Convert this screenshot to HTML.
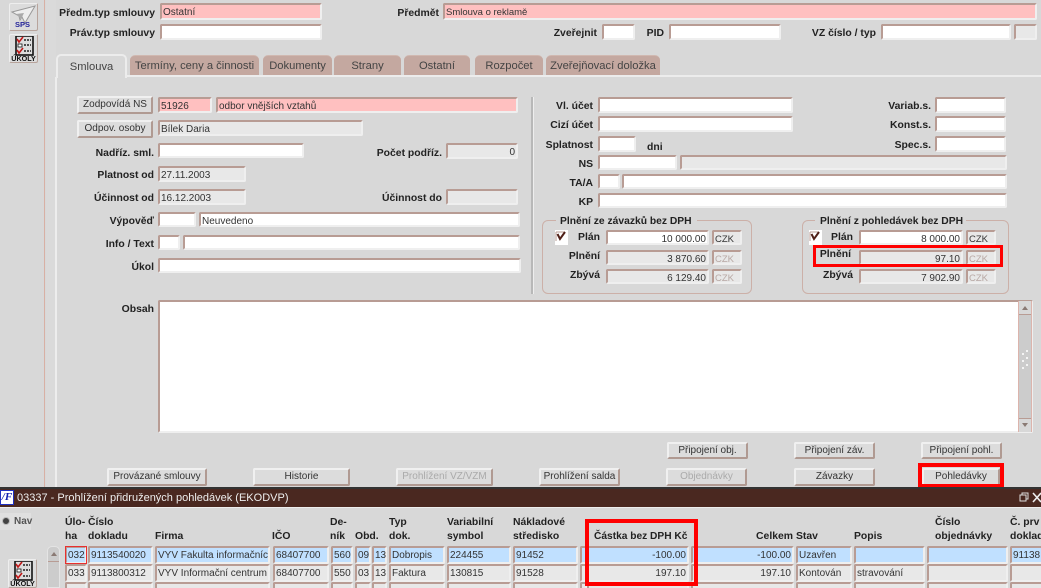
<!DOCTYPE html>
<html><head><meta charset="utf-8"><style>
html,body{margin:0;padding:0;width:1041px;height:588px;overflow:hidden;background:#d8d8d8}
#w{position:relative;width:1041px;height:588px;overflow:hidden;font-family:"Liberation Sans",sans-serif;filter:blur(.3px)}
#w div{position:absolute;box-sizing:border-box;white-space:nowrap}
.l{font-weight:bold;font-size:10.4px;line-height:14px;margin-top:2px;color:#222;text-align:right}
.h{font-weight:bold;font-size:10.4px;line-height:14px;margin-top:2px;color:#222}
.f{border:2px solid;border-color:#b89c94 #efefef #efefef #b89c94;border-radius:2px;font-size:10px;line-height:14px;color:#333;padding:1px 1px 0}
.w{background:#fff}.p{background:#ffc0c0}.g{background:#e8e8e8}.b{background:#c0e0ff}
.r{text-align:right}
.z{color:#b8a8a4}
.n{font-size:10px!important}
.k{font-size:9.5px!important}
.t{background:#c4a8a0;border-radius:5px 5px 0 0;border-top:1px solid #d0b8b0;font-size:11.2px;line-height:20px;color:#444;text-align:center;height:20px;top:55px}
.btn{background:#dcdcdc;border:2px solid;border-color:#f0f0f0 #b09a92 #b09a92 #f0f0f0;border-radius:2px;font-size:10px;line-height:13px;color:#333;text-align:center}
.dis{color:#aaa}
.gb{border:1.5px solid #ccb0a8;border-radius:6px}
.red{border:4px solid #f00}
.c{font-size:10px;line-height:14px;padding:1px 1px 0}
</style></head><body><div id="w">

<!-- left strip -->
<div style="left:44px;top:0;width:1px;height:489px;background:#d8b0a4"></div>
<div style="left:46px;top:0;width:10px;height:489px;background:#dadada"></div>
<div style="left:55px;top:77px;width:2px;height:411px;background:#ededed"></div>

<!-- SPS icon -->
<div style="left:9px;top:3px;width:29px;height:28px;background:#dcdcdc;border:1px solid;border-color:#eee #b8a49c #b8a49c #eee;border-radius:2px">
<svg width="27" height="26" style="position:absolute;left:0;top:0"><path d="M2 8L25 2L15 19L12 13L10 16L9 12Z" fill="#eee" stroke="#999" stroke-width="1"/><path d="M6 10L14 9L11 15" fill="#aaa"/></svg>
<div style="left:5px;top:17px;font-size:7.5px;line-height:8px;font-weight:bold;color:#24249a">SPS</div></div>
<!-- UKOLY icon -->
<div style="left:9px;top:34px;width:29px;height:29px;background:#dcdcdc;border:1px solid;border-color:#eee #b8a49c #b8a49c #eee;border-radius:2px">
<svg width="27" height="20" style="position:absolute;left:0;top:1px"><rect x="6" y="0" width="17" height="19" fill="#ddd" stroke="#111" stroke-width="1.6"/><path d="M7 3L9 6L13 1M7 14L9 17L13 12" stroke="#c01818" stroke-width="1.6" fill="none"/><rect x="8" y="8" width="4" height="3" fill="#fff" stroke="#111" stroke-width=".8"/><path d="M14 4H21M14 9H21M14 15H21" stroke="#222" stroke-width="1.4" stroke-dasharray="2 1"/></svg>
<div style="left:0;top:20px;width:27px;text-align:center;font-size:7.2px;line-height:7px;font-weight:bold;color:#111">ÚKOLY</div></div>

<!-- header -->
<div class="l" style="right:886px;top:5px">Předm.typ smlouvy</div>
<div class="f p" style="left:160px;top:3px;width:162px;height:17px">Ostatní</div>
<div class="l" style="right:886px;top:25px">Práv.typ smlouvy</div>
<div class="f w" style="left:160px;top:24px;width:162px;height:16px"></div>
<div class="l" style="right:602px;top:5px">Předmět</div>
<div class="f p" style="left:443px;top:3px;width:594px;height:17px;font-size:9.5px">Smlouva o reklamě</div>
<div class="l" style="right:444px;top:25px">Zveřejnit</div>
<div class="f w" style="left:602px;top:24px;width:33px;height:16px"></div>
<div class="l" style="right:377px;top:25px">PID</div>
<div class="f w" style="left:669px;top:24px;width:112px;height:16px"></div>
<div class="l" style="right:165px;top:25px">VZ číslo / typ</div>
<div class="f w" style="left:881px;top:24px;width:130px;height:16px"></div>
<div class="f g" style="left:1014px;top:24px;width:23px;height:16px"></div>

<!-- tabs -->
<div style="left:126px;top:75px;width:915px;height:2px;background:#ececec"></div>
<div style="left:56px;top:54px;width:71px;height:24px;background:#d8d8d8;border:2px solid #ececec;border-bottom:0;border-radius:5px 5px 0 0;font-size:11.2px;line-height:22px;color:#444;text-align:center">Smlouva</div>
<div class="t" style="left:130px;width:129px">Termíny, ceny a činnosti</div>
<div class="t" style="left:263px;width:69px">Dokumenty</div>
<div class="t" style="left:334px;width:67px">Strany</div>
<div class="t" style="left:404px;width:66px">Ostatní</div>
<div class="t" style="left:475px;width:68px">Rozpočet</div>
<div class="t" style="left:546px;width:114px">Zveřejňovací doložka</div>

<!-- left column -->
<div class="btn" style="left:77px;top:96px;width:76px;height:18px">Zodpovídá NS</div>
<div class="f p" style="left:158px;top:97px;width:54px;height:16px">51926</div>
<div class="f p" style="left:216px;top:97px;width:302px;height:16px">odbor vnějších vztahů</div>
<div class="btn" style="left:77px;top:120px;width:76px;height:18px">Odpov. osoby</div>
<div class="f g" style="left:158px;top:120px;width:205px;height:16px">Bílek Daria</div>
<div class="l" style="right:887px;top:145px">Nadříz. sml.</div>
<div class="f w" style="left:158px;top:143px;width:146px;height:15px"></div>
<div class="l" style="right:887px;top:167px">Platnost od</div>
<div class="f g" style="left:158px;top:166px;width:88px;height:16px">27.11.2003</div>
<div class="l" style="right:887px;top:190px">Účinnost od</div>
<div class="f g" style="left:158px;top:189px;width:88px;height:16px">16.12.2003</div>
<div class="l" style="right:887px;top:213px">Výpověď</div>
<div class="f w" style="left:158px;top:212px;width:38px;height:15px"></div>
<div class="f w" style="left:199px;top:212px;width:321px;height:15px">Neuvedeno</div>
<div class="l" style="right:887px;top:236px">Info / Text</div>
<div class="f w" style="left:158px;top:235px;width:22px;height:15px"></div>
<div class="f w" style="left:183px;top:235px;width:337px;height:15px"></div>
<div class="l" style="right:887px;top:259px">Úkol</div>
<div class="f w" style="left:158px;top:258px;width:363px;height:15px"></div>
<div class="l" style="right:599px;top:145px">Počet podříz.</div>
<div class="f g r" style="left:446px;top:143px;width:72px;height:16px">0</div>
<div class="l" style="right:599px;top:190px">Účinnost do</div>
<div class="f g" style="left:446px;top:189px;width:72px;height:16px"></div>

<!-- divider -->
<div style="left:531px;top:97px;width:2px;height:197px;background:#b8b8b8"></div>
<div style="left:533px;top:97px;width:1px;height:197px;background:#eee"></div>

<!-- right column -->
<div class="l" style="right:448px;top:98px">Vl. účet</div>
<div class="f w" style="left:598px;top:97px;width:195px;height:16px"></div>
<div class="l" style="right:448px;top:117px">Cizí účet</div>
<div class="f w" style="left:598px;top:116px;width:195px;height:16px"></div>
<div class="l" style="right:448px;top:137px">Splatnost</div>
<div class="f w" style="left:598px;top:136px;width:38px;height:16px"></div>
<div class="h" style="left:647px;top:139px">dni</div>
<div class="l" style="right:448px;top:156px">NS</div>
<div class="f w" style="left:598px;top:155px;width:79px;height:15px"></div>
<div class="f g" style="left:680px;top:155px;width:327px;height:15px"></div>
<div class="l" style="right:448px;top:175px">TA/A</div>
<div class="f w" style="left:598px;top:174px;width:22px;height:15px"></div>
<div class="f w" style="left:622px;top:174px;width:385px;height:15px"></div>
<div class="l" style="right:448px;top:194px">KP</div>
<div class="f w" style="left:598px;top:193px;width:409px;height:15px"></div>
<div class="l" style="right:110px;top:98px">Variab.s.</div>
<div class="f w" style="left:935px;top:97px;width:71px;height:16px"></div>
<div class="l" style="right:110px;top:117px">Konst.s.</div>
<div class="f w" style="left:935px;top:116px;width:71px;height:16px"></div>
<div class="l" style="right:110px;top:137px">Spec.s.</div>
<div class="f w" style="left:935px;top:136px;width:71px;height:16px"></div>

<!-- group boxes -->
<div class="gb" style="left:542px;top:220px;width:210px;height:74px"></div>
<div style="left:556px;top:214px;width:141px;height:14px;background:#d8d8d8"></div>
<div class="h" style="left:560px;top:213px;font-size:10.3px">Plnění ze závazků bez DPH</div>
<div style="left:555px;top:230px;width:13px;height:15px;background:#fff"><svg width="13" height="15" style="position:absolute;left:0;top:0"><path d="M1 2H10" fill="none" stroke="#b89c94"/><path d="M1 2V11" fill="none" stroke="#b89c94"/><path d="M2.5 4L5 9L10 2" fill="none" stroke="#502018" stroke-width="2"/></svg></div>
<div class="l" style="right:441px;top:229px">Plán</div>
<div class="f w r n" style="left:606px;top:230px;width:103px;height:15px">10 000.00</div>
<div class="f g k" style="left:712px;top:230px;width:30px;height:15px">CZK</div>
<div class="l" style="right:441px;top:248px">Plnění</div>
<div class="f g r n" style="left:606px;top:250px;width:103px;height:15px">3 870.60</div>
<div class="f g z k" style="left:712px;top:250px;width:30px;height:15px">CZK</div>
<div class="l" style="right:441px;top:267px">Zbývá</div>
<div class="f g r n" style="left:606px;top:269px;width:103px;height:15px">6 129.40</div>
<div class="f g z k" style="left:712px;top:269px;width:30px;height:15px">CZK</div>

<div class="gb" style="left:802px;top:220px;width:207px;height:74px"></div>
<div style="left:815px;top:214px;width:151px;height:14px;background:#d8d8d8"></div>
<div class="h" style="left:820px;top:213px;font-size:10.3px">Plnění z pohledávek bez DPH</div>
<div style="left:809px;top:230px;width:13px;height:15px;background:#fff"><svg width="13" height="15" style="position:absolute;left:0;top:0"><path d="M1 2H10" fill="none" stroke="#b89c94"/><path d="M1 2V11" fill="none" stroke="#b89c94"/><path d="M2.5 4L5 9L10 2" fill="none" stroke="#502018" stroke-width="2"/></svg></div>
<div class="l" style="right:188px;top:229px">Plán</div>
<div class="f w r n" style="left:859px;top:230px;width:104px;height:15px">8 000.00</div>
<div class="f g k" style="left:966px;top:230px;width:30px;height:15px">CZK</div>
<div class="l" style="right:190px;top:246px">Plnění</div>
<div class="f g r n" style="left:859px;top:250px;width:104px;height:15px">97.10</div>
<div class="f g z k" style="left:966px;top:250px;width:30px;height:15px">CZK</div>
<div class="l" style="right:188px;top:267px">Zbývá</div>
<div class="f g r n" style="left:859px;top:269px;width:104px;height:15px">7 902.90</div>
<div class="f g z k" style="left:966px;top:269px;width:30px;height:15px">CZK</div>
<div class="red" style="left:813px;top:245px;width:190px;height:22px;border-width:3px"></div>

<!-- Obsah -->
<div class="l" style="right:887px;top:301px">Obsah</div>
<div class="f w" style="left:158px;top:300px;width:875px;height:133px"></div>
<div style="left:1018px;top:301px;width:14px;height:131px;background:#ccc;border-left:1px solid #dcb4ac;border-right:1px solid #dcb4ac">
<div style="left:0;top:0;width:12px;height:14px;background:#d8d8d8;border-bottom:1px solid #b89c94"></div>
<div style="left:3px;top:5px;width:0;height:0;border:3px solid transparent;border-top:0;border-bottom:4px solid #8a7a74"></div>
<div style="left:0;bottom:0;width:12px;height:14px;background:#d8d8d8;border-top:1px solid #b89c94"></div>
<div style="left:3px;bottom:5px;width:0;height:0;border:3px solid transparent;border-bottom:0;border-top:4px solid #8a7a74"></div>
<div style="left:3px;top:52px;width:2px;height:2px;background:#f4f4f4;box-shadow:4px -3px #f4f4f4,0 7px #f4f4f4,4px 4px #f4f4f4,0 14px #f4f4f4,4px 11px #f4f4f4"></div>
</div>

<!-- buttons -->
<div class="btn" style="left:667px;top:442px;width:81px;height:17px">Připojení obj.</div>
<div class="btn" style="left:794px;top:442px;width:81px;height:17px">Připojení záv.</div>
<div class="btn" style="left:921px;top:442px;width:81px;height:17px">Připojení pohl.</div>
<div class="btn" style="left:107px;top:468px;width:100px;height:18px">Provázané smlouvy</div>
<div class="btn" style="left:253px;top:468px;width:97px;height:18px">Historie</div>
<div class="btn dis" style="left:396px;top:468px;width:97px;height:18px">Prohlížení VZ/VZM</div>
<div class="btn" style="left:539px;top:468px;width:81px;height:18px">Prohlížení salda</div>
<div class="btn dis" style="left:666px;top:468px;width:81px;height:18px">Objednávky</div>
<div class="btn" style="left:794px;top:468px;width:81px;height:18px">Závazky</div>
<div class="btn" style="left:922px;top:468px;width:78px;height:18px">Pohledávky</div>
<div class="red" style="left:918px;top:463px;width:86px;height:25px"></div>

<!-- title bar -->
<div style="left:0;top:487px;width:1041px;height:2px;background:#333"></div>
<div style="left:0;top:489px;width:1041px;height:18px;background:#4a2820;color:#eee;font-size:11px;line-height:18px;padding-left:17px">03337 - Prohlížení přidružených pohledávek (EKODVP)</div>
<div style="left:0;top:490px;width:14px;height:15px;background:#fff;border:1px solid #2030c0;color:#1020b0;font:italic bold 11px/13px 'Liberation Serif',serif;text-align:center">/F</div>
<svg width="24" height="18" style="position:absolute;left:1017px;top:489px"><rect x="5" y="4" width="6" height="6" fill="none" stroke="#ddd"/><rect x="3" y="6" width="6" height="6" fill="#4a2820" stroke="#ddd"/><path d="M16 4L24 13M24 4L16 13" stroke="#eee" stroke-width="1.6"/></svg>
<div style="left:0;top:507px;width:1041px;height:81px;background:#d8d8d8;border-top:1px solid #eee"></div>

<!-- Nav -->
<div style="left:0;top:513px;width:31px;height:17px;background:#e0e0e0"></div>
<div style="left:2px;top:517px;width:8px;height:8px;border-radius:50%;background:#444;border:1px solid #bbb"></div>
<div style="left:14px;top:515px;font-size:10px;line-height:14px;color:#555;font-weight:bold">Nav</div>
<div style="left:8px;top:559px;width:29px;height:29px;background:#dcdcdc;border:1px solid;border-color:#eee #b8a49c #b8a49c #eee;border-radius:2px">
<svg width="27" height="20" style="position:absolute;left:0;top:1px"><rect x="6" y="0" width="17" height="19" fill="#ddd" stroke="#111" stroke-width="1.6"/><path d="M7 3L9 6L13 1M7 14L9 17L13 12" stroke="#c01818" stroke-width="1.6" fill="none"/><rect x="8" y="8" width="4" height="3" fill="#fff" stroke="#111" stroke-width=".8"/><path d="M14 4H21M14 9H21M14 15H21" stroke="#222" stroke-width="1.4" stroke-dasharray="2 1"/></svg>
<div style="left:0;top:20px;width:27px;text-align:center;font-size:7.2px;line-height:7px;font-weight:bold;color:#111">ÚKOLY</div></div>

<!-- table headers -->
<div class="h" style="left:65px;top:514px">Úlo-<br>ha</div>
<div class="h" style="left:88px;top:514px">Číslo<br>dokladu</div>
<div class="h" style="left:155px;top:528px">Firma</div>
<div class="h" style="left:272px;top:528px">IČO</div>
<div class="h" style="left:330px;top:514px">De-<br>ník</div>
<div class="h" style="left:355px;top:528px">Obd.</div>
<div class="h" style="left:389px;top:514px">Typ<br>dok.</div>
<div class="h" style="left:447px;top:514px">Variabilní<br>symbol</div>
<div class="h" style="left:513px;top:514px">Nákladové<br>středisko</div>
<div class="h" style="left:594px;top:528px;font-size:10.2px">Částka bez DPH Kč</div>
<div class="h" style="right:248px;top:528px">Celkem</div>
<div class="h" style="left:796px;top:528px">Stav</div>
<div class="h" style="left:854px;top:528px">Popis</div>
<div class="h" style="left:935px;top:514px">Číslo<br>objednávky</div>
<div class="h" style="left:1010px;top:514px">Č. prv<br>doklad</div>

<!-- row 1 -->
<div class="f b c" style="left:65px;top:546px;width:22px;height:18px">032</div>
<div class="f b c" style="left:88px;top:546px;width:65px;height:18px">9113540020</div>
<div class="f b c" style="left:155px;top:546px;width:115px;height:18px">VYV Fakulta informačníc</div>
<div class="f b c" style="left:273px;top:546px;width:56px;height:18px">68407700</div>
<div class="f b c" style="left:331px;top:546px;width:22px;height:18px">560</div>
<div class="f b c" style="left:355px;top:546px;width:16px;height:18px">09</div>
<div class="f b c" style="left:372px;top:546px;width:15px;height:18px">13</div>
<div class="f b c" style="left:389px;top:546px;width:56px;height:18px">Dobropis</div>
<div class="f b c" style="left:447px;top:546px;width:64px;height:18px">224455</div>
<div class="f b c" style="left:513px;top:546px;width:65px;height:18px">91452</div>
<div class="f b c" style="left:580px;top:546px;width:7px;height:18px"></div>
<div class="f b c r" style="left:587px;top:546px;width:102px;height:18px">-100.00</div>
<div class="f b c r" style="left:691px;top:546px;width:103px;height:18px">-100.00</div>
<div class="f b c" style="left:796px;top:546px;width:56px;height:18px">Uzavřen</div>
<div class="f b c" style="left:854px;top:546px;width:71px;height:18px"></div>
<div class="f b c" style="left:927px;top:546px;width:81px;height:18px"></div>
<div class="f b c" style="left:1010px;top:546px;width:35px;height:18px">91138</div>
<!-- row 2 -->
<div class="f g c" style="left:65px;top:564px;width:22px;height:18px">033</div>
<div class="f g c" style="left:88px;top:564px;width:65px;height:18px">9113800312</div>
<div class="f g c" style="left:155px;top:564px;width:115px;height:18px">VYV Informační centrum</div>
<div class="f g c" style="left:273px;top:564px;width:56px;height:18px">68407700</div>
<div class="f g c" style="left:331px;top:564px;width:22px;height:18px">550</div>
<div class="f g c" style="left:355px;top:564px;width:16px;height:18px">03</div>
<div class="f g c" style="left:372px;top:564px;width:15px;height:18px">13</div>
<div class="f g c" style="left:389px;top:564px;width:56px;height:18px">Faktura</div>
<div class="f g c" style="left:447px;top:564px;width:64px;height:18px">130815</div>
<div class="f g c" style="left:513px;top:564px;width:65px;height:18px">91528</div>
<div class="f g c" style="left:580px;top:564px;width:7px;height:18px"></div>
<div class="f g c r" style="left:587px;top:564px;width:102px;height:18px">197.10</div>
<div class="f g c r" style="left:691px;top:564px;width:103px;height:18px">197.10</div>
<div class="f g c" style="left:796px;top:564px;width:56px;height:18px">Kontován</div>
<div class="f g c" style="left:854px;top:564px;width:71px;height:18px">stravování</div>
<div class="f g c" style="left:927px;top:564px;width:81px;height:18px"></div>
<div class="f g c" style="left:1010px;top:564px;width:35px;height:18px"></div>
<!-- row 3 -->
<div class="f g" style="left:65px;top:582px;width:22px;height:10px"></div>
<div class="f g" style="left:88px;top:582px;width:65px;height:10px"></div>
<div class="f g" style="left:155px;top:582px;width:115px;height:10px"></div>
<div class="f g" style="left:273px;top:582px;width:56px;height:10px"></div>
<div class="f g" style="left:331px;top:582px;width:22px;height:10px"></div>
<div class="f g" style="left:355px;top:582px;width:16px;height:10px"></div>
<div class="f g" style="left:372px;top:582px;width:15px;height:10px"></div>
<div class="f g" style="left:389px;top:582px;width:56px;height:10px"></div>
<div class="f g" style="left:447px;top:582px;width:64px;height:10px"></div>
<div class="f g" style="left:513px;top:582px;width:65px;height:10px"></div>
<div class="f g" style="left:580px;top:582px;width:7px;height:10px"></div>
<div class="f g" style="left:587px;top:582px;width:102px;height:10px"></div>
<div class="f g" style="left:691px;top:582px;width:103px;height:10px"></div>
<div class="f g" style="left:796px;top:582px;width:56px;height:10px"></div>
<div class="f g" style="left:854px;top:582px;width:71px;height:10px"></div>
<div class="f g" style="left:927px;top:582px;width:81px;height:10px"></div>
<div class="f g" style="left:1010px;top:582px;width:35px;height:10px"></div>

<!-- row scrollbar -->
<div style="left:47px;top:546px;width:13px;height:42px;background:#ccc;border:1px solid #e4e4e4;border-radius:5px 5px 0 0">
<div style="left:3px;top:5px;width:0;height:0;border:3px solid transparent;border-top:0;border-bottom:4px solid #8a7a74"></div>
<div style="left:0;top:14px;width:11px;height:1px;background:#b89c94"></div>
</div>

<div style="left:65px;top:546px;width:22px;height:18px;border:1px solid #e83030"></div>
<div class="red" style="left:585px;top:519px;width:113px;height:67px"></div>

</div></body></html>
